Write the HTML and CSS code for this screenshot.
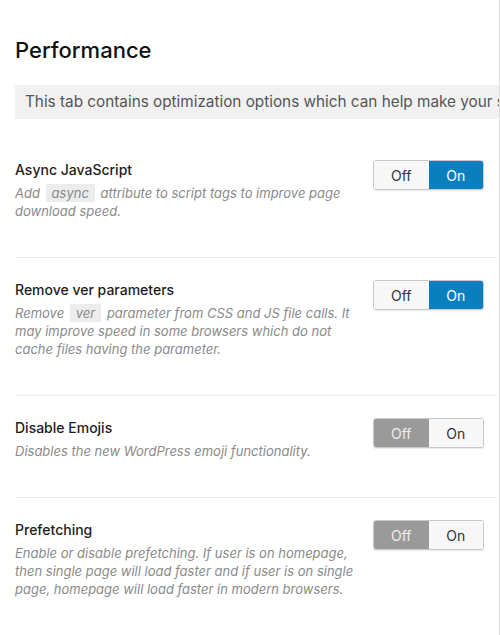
FILE: index.html
```html
<!DOCTYPE html>
<html lang="en">
<head>
    <meta charset="UTF-8">
    <meta name="viewport" content="width=device-width, initial-scale=1.0">
    <title>Performance</title>
    <link rel="stylesheet" href="styles.css">
</head>
<body>
    <div class="page">
        <h2>Performance</h2>
        <div class="notice">This tab contains optimization options which can help make your site load faster.</div>

        <div class="optionRow">
            <div class="optionText">
                <h3>Async JavaScript</h3>
                <p>Add <code>async</code> attribute to script tags to improve page download speed.</p>
            </div>
            <div class="toggle">
                <button>Off</button>
                <button class="active on">On</button>
            </div>
        </div>

        <div class="optionRow">
            <div class="optionText">
                <h3>Remove ver parameters</h3>
                <p>Remove <code>ver</code> parameter from CSS and JS file calls. It may improve speed in some browsers which do not cache files having the parameter.</p>
            </div>
            <div class="toggle">
                <button>Off</button>
                <button class="active on">On</button>
            </div>
        </div>

        <div class="optionRow">
            <div class="optionText">
                <h3>Disable Emojis</h3>
                <p>Disables the new WordPress emoji functionality.</p>
            </div>
            <div class="toggle">
                <button class="active off">Off</button>
                <button>On</button>
            </div>
        </div>

        <div class="optionRow">
            <div class="optionText">
                <h3>Prefetching</h3>
                <p>Enable or disable prefetching. If user is on homepage, then single page will load faster and if user is on single page, homepage will load faster in modern browsers.</p>
            </div>
            <div class="toggle">
                <button class="active off">Off</button>
                <button>On</button>
            </div>
        </div>
    </div>
</body>
</html>
```

FILE: styles.css
```css
* {
  box-sizing: border-box;
  margin: 0;
  padding: 0;
}

html, body {
  overflow: hidden;
}

body {
  background-color: #FFFFFF;
  font-family: "Inter", "Liberation Sans", sans-serif;
  color: #222;
  -webkit-font-smoothing: antialiased;
}

.page {
  width: 500px;
  height: 635px;
  padding: 36px 0 0 15px;
  border-right: 1px solid #dcdcdc;
  overflow: hidden;
}

h2 {
  font-size: 22px;
  font-weight: 500;
  line-height: 28px;
  color: #111;
  margin-bottom: 21px;
}

.notice {
  background-color: #f1f1f1;
  color: #555;
  font-size: 15.3px;
  line-height: 34px;
  padding: 0 10px;
  white-space: nowrap;
  overflow: hidden;
  margin-bottom: 19px;
}

.optionRow {
  display: flex;
  justify-content: space-between;
  align-items: flex-start;
  padding: 22px 13px 37px 0;
  border-bottom: 1px solid #eeeeee;
  margin-right: 2px;
}

.optionRow:last-child {
  border-bottom: none;
}

.optionText {
  width: 340px;
}

.optionText h3 {
  font-size: 14px;
  font-weight: 500;
  line-height: 20px;
  color: #1d1d1d;
  margin-bottom: 4px;
}

.optionText p {
  font-size: 13px;
  font-style: italic;
  line-height: 18px;
  color: #8a8a8a;
}

.optionText code {
  display: inline-block;
  font-family: inherit;
  line-height: 18px;
  background-color: #ececec;
  padding: 0 6px;
  margin: 0 2px;
}

.toggle {
  display: flex;
  width: 111px;
  height: 30px;
  border: 1px solid #c8c8c8;
  border-radius: 3px;
  overflow: hidden;
  box-shadow: 0 1px 1px rgba(0, 0, 0, 0.08);
}

.toggle button {
  flex: 1;
  border: none;
  background-color: #f7f7f7;
  color: #333;
  font-family: inherit;
  font-size: 14px;
}

.toggle button.on {
  background-color: #0a7fbd;
  color: #FFFFFF;
}

.toggle button.off {
  background-color: #9a9a9a;
  color: #eeeeee;
}
```
